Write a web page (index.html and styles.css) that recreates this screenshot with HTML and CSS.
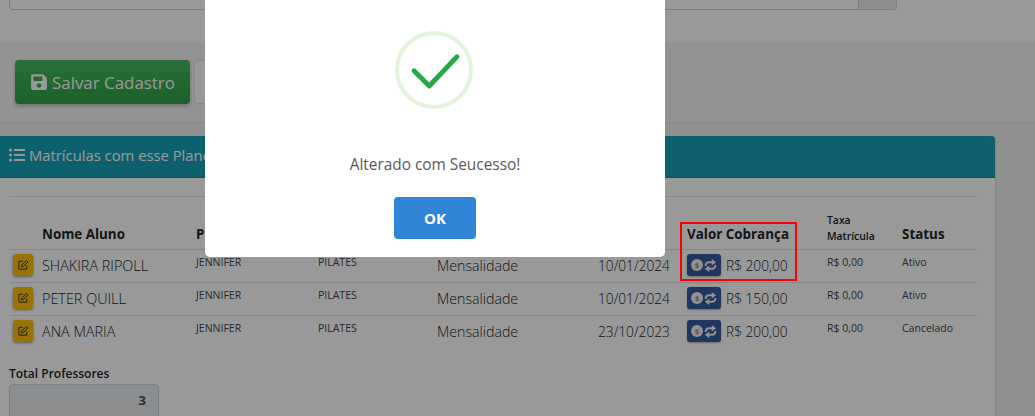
FILE: index.html
```html
<!DOCTYPE html>
<html lang="pt-BR">
<head>
<meta charset="utf-8">
<title>Matrículas</title>
<link rel="stylesheet" href="styles.css">
</head>
<body>
<div class="page">
  <div class="top-form">
    <div class="input-group"><div class="input-fill"></div><div class="input-addon"></div></div>
  </div>
  <div class="actions">
    <button class="btn-save">
      <svg class="ico-save" viewBox="0 0 448 512"><path fill="currentColor" d="M433.941 129.941l-83.882-83.882A48 48 0 0 0 316.118 32H48C21.49 32 0 53.49 0 80v352c0 26.51 21.49 48 48 48h352c26.51 0 48-21.49 48-48V163.882a48 48 0 0 0-14.059-33.941zM224 416c-35.346 0-64-28.654-64-64 0-35.346 28.654-64 64-64s64 28.654 64 64c0 35.346-28.654 64-64 64zm96-304.52V212c0 6.627-5.373 12-12 12H76c-6.627 0-12-5.373-12-12V108c0-6.627 5.373-12 12-12h228.52c3.183 0 6.235 1.264 8.485 3.515l3.48 3.48A11.996 11.996 0 0 1 320 111.48z"/></svg>
      Salvar Cadastro
    </button>
    <button class="btn-light"></button>
  </div>
  <div class="gutter">
    <section class="card">
      <header class="card-head">
        <svg class="ico-list" viewBox="0 0 512 512"><path fill="currentColor" d="M48 48a48 48 0 1 0 48 48 48 48 0 0 0-48-48zm0 160a48 48 0 1 0 48 48 48 48 0 0 0-48-48zm0 160a48 48 0 1 0 48 48 48 48 0 0 0-48-48zm448 16H176a16 16 0 0 0-16 16v32a16 16 0 0 0 16 16h320a16 16 0 0 0 16-16v-32a16 16 0 0 0-16-16zm0-320H176a16 16 0 0 0-16 16v32a16 16 0 0 0 16 16h320a16 16 0 0 0 16-16V80a16 16 0 0 0-16-16zm0 160H176a16 16 0 0 0-16 16v32a16 16 0 0 0 16 16h320a16 16 0 0 0 16-16v-32a16 16 0 0 0-16-16z"/></svg>
        <span>Matrículas com esse Plano</span>
      </header>
      <div class="card-body">
        <table class="grid">
          <colgroup>
            <col class="c-act"><col class="c-name"><col class="c-prof"><col class="c-mod"><col class="c-tipo"><col class="c-date"><col class="c-val"><col class="c-taxa"><col class="c-status">
          </colgroup>
          <thead>
            <tr>
              <th></th><th>Nome Aluno</th><th>Professor</th><th></th><th></th><th></th><th>Valor Cobrança</th><th class="th-small">Taxa Matrícula</th><th>Status</th>
            </tr>
          </thead>
          <tbody>
            <tr>
              <td class="cell-act"><button class="btn-edit"><svg viewBox="0 0 16 16"><path d="M13 9v4.500H2.500V3H8"/><path d="M6 10.500l.6-2.600 6-6 2 2-6 6z"/></svg></button></td>
              <td class="cell-name">SHAKIRA RIPOLL</td><td class="cell-small">JENNIFER</td><td class="cell-small">PILATES</td><td class="cell-tipo">Mensalidade</td><td class="cell-big">10/01/2024</td>
              <td class="cell-big"><div class="val"><button class="btn-pay"><svg class="ico-coin" viewBox="0 0 14 14"><circle cx="7" cy="7" r="7"/><text x="7" y="10" class="coin-text">$</text></svg><svg class="ico-swap" viewBox="0 0 16 16"><path d="M2 8.500C2 5.500 3.500 4 6 4h4"/><path d="M14 7.500C14 10.500 12.500 12 10 12H6"/><path class="head" d="M9.500 0L15 4 9.500 8z"/><path class="head" d="M6.500 8L1 12l5.500 4z"/></svg></button>R$ 200,00</div></td>
              <td class="cell-small">R$ 0,00</td><td class="cell-small">Ativo</td>
            </tr>
            <tr>
              <td class="cell-act"><button class="btn-edit"><svg viewBox="0 0 16 16"><path d="M13 9v4.500H2.500V3H8"/><path d="M6 10.500l.6-2.600 6-6 2 2-6 6z"/></svg></button></td>
              <td class="cell-name">PETER QUILL</td><td class="cell-small">JENNIFER</td><td class="cell-small">PILATES</td><td class="cell-tipo">Mensalidade</td><td class="cell-big">10/01/2024</td>
              <td class="cell-big"><div class="val"><button class="btn-pay"><svg class="ico-coin" viewBox="0 0 14 14"><circle cx="7" cy="7" r="7"/><text x="7" y="10" class="coin-text">$</text></svg><svg class="ico-swap" viewBox="0 0 16 16"><path d="M2 8.500C2 5.500 3.500 4 6 4h4"/><path d="M14 7.500C14 10.500 12.500 12 10 12H6"/><path class="head" d="M9.500 0L15 4 9.500 8z"/><path class="head" d="M6.500 8L1 12l5.500 4z"/></svg></button>R$ 150,00</div></td>
              <td class="cell-small">R$ 0,00</td><td class="cell-small">Ativo</td>
            </tr>
            <tr>
              <td class="cell-act"><button class="btn-edit"><svg viewBox="0 0 16 16"><path d="M13 9v4.500H2.500V3H8"/><path d="M6 10.500l.6-2.600 6-6 2 2-6 6z"/></svg></button></td>
              <td class="cell-name">ANA MARIA</td><td class="cell-small">JENNIFER</td><td class="cell-small">PILATES</td><td class="cell-tipo">Mensalidade</td><td class="cell-big">23/10/2023</td>
              <td class="cell-big"><div class="val"><button class="btn-pay"><svg class="ico-coin" viewBox="0 0 14 14"><circle cx="7" cy="7" r="7"/><text x="7" y="10" class="coin-text">$</text></svg><svg class="ico-swap" viewBox="0 0 16 16"><path d="M2 8.500C2 5.500 3.500 4 6 4h4"/><path d="M14 7.500C14 10.500 12.500 12 10 12H6"/><path class="head" d="M9.500 0L15 4 9.500 8z"/><path class="head" d="M6.500 8L1 12l5.500 4z"/></svg></button>R$ 200,00</div></td>
              <td class="cell-small">R$ 0,00</td><td class="cell-small">Cancelado</td>
            </tr>
          </tbody>
        </table>
        <div class="total">
          <div class="total-label">Total Professores</div>
          <div class="total-box">3</div>
        </div>
      </div>
    </section>
  </div>
</div>

<div class="backdrop"></div>
<div class="highlight"></div>
<div class="modal">
  <div class="success-ring">
    <svg viewBox="0 0 48 36"><path d="M4 18.700L19.300 34 47 4.700"/></svg>
  </div>
  <p class="modal-text">Alterado com Seucesso!</p>
  <button class="modal-ok">OK</button>
</div>
</body>
</html>
```
FILE: styles.css
```css
* { box-sizing: border-box; }
html, body { margin: 0; height: 416px; overflow: hidden; }
body { font-family: "Open Sans", "Noto Sans", sans-serif; color: #212529; background: #fff; }
button { font-family: inherit; }

.page { height: 416px; overflow: hidden; display: flex; flex-direction: column; }

.top-form { height: 42px; padding: 0 138px 0 9px; background: #fff; }
.input-group { height: 10px; display: flex; border: 1px solid #ced4da; border-top: 0; border-radius: 0 0 4px 4px; }
.input-fill { flex: 1; }
.input-addon { width: 38px; background: #e9ecef; border-left: 1px solid #ced4da; border-radius: 0 0 4px 0; }

.actions { height: 81px; padding: 18px 0 0 15px; display: flex; gap: 4px; align-items: flex-start; background: #f6f6f6; border-bottom: 1px solid #e4e5e6; }
.btn-save { width: 175px; height: 44px; border: 0; border-radius: 4px; background: linear-gradient(#48b761, #2ba445); color: #fff; font-size: 16.9px; display: flex; align-items: center; gap: 5px; padding: 0 0 0 16px; box-shadow: 0 2px 4px rgba(0,0,0,.25); }
.ico-save { width: 16px; height: 18px; }
.btn-light { width: 100px; height: 44px; border: 1px solid #dee2e6; border-radius: 4px; background: #fff; }

.gutter { flex: 1; background: #f0f1f2; padding-top: 13px; min-height: 0; }
.card { width: 995px; height: 100%; background: #fff; border-radius: 0 4px 0 0; box-shadow: 1px 0 2px rgba(0,0,0,.12); }
.card-head { height: 42px; background: #17a2b8; border-radius: 0 4px 0 0; color: #fff; font-size: 14.8px; display: flex; align-items: center; gap: 4px; padding: 0 0 3px 9px; border-bottom: 1px solid #148ea1; }
.ico-list { width: 16px; height: 16px; }
.card-body { padding: 18px 18px 0 9px; }

.grid { width: 968px; table-layout: fixed; border-collapse: collapse; border-top: 1px solid #dee2e6; }
.c-act { width: 29px; } .c-name { width: 154px; } .c-prof { width: 122px; } .c-mod { width: 119px; } .c-tipo { width: 161px; } .c-date { width: 89px; } .c-val { width: 140px; } .c-taxa { width: 75px; } .c-status { width: 79px; }
.grid th { height: 53px; padding: 0 4px 6px; vertical-align: bottom; text-align: left; font-size: 13.4px; font-weight: 700; border-bottom: 1px solid #dee2e6; white-space: nowrap; }
.grid th.th-small { font-size: 10.4px; font-weight: 600; line-height: 16px; white-space: normal; padding-bottom: 5px; }
.grid td { height: 33px; padding: 0 4px 2px; border-bottom: 1px solid #dee2e6; white-space: nowrap; }
.grid tbody tr:last-child td { border-bottom: 0; }
.cell-big { font-size: 13.7px; font-weight: 300; vertical-align: middle; }
.cell-tipo { font-size: 14.2px; font-weight: 300; vertical-align: middle; }
.cell-name { font-size: 14.4px; font-weight: 300; vertical-align: middle; }
.cell-small { font-size: 10.5px; font-weight: 400; color: #41464b; vertical-align: top; padding-top: 5px !important; }
.cell-act { vertical-align: middle; }
.btn-edit { width: 20px; height: 22px; padding: 0; border: 0; border-radius: 3px; background: #ffc107; box-shadow: 0 1px 3px rgba(0,0,0,.4); display: flex; align-items: center; justify-content: center; }
.btn-edit svg { width: 12px; height: 12px; fill: none; stroke: #212529; stroke-width: 1.2; }
.val { display: flex; align-items: center; gap: 5px; }
.btn-pay { width: 34px; height: 22px; padding: 0 4px; border: 0; border-radius: 3px; background: #345a9e; box-shadow: 0 1px 2px rgba(0,0,0,.3); display: flex; align-items: center; justify-content: space-between; }
.ico-coin { width: 12px; height: 12px; }
.ico-coin circle { fill: #f2f2f2; }
.coin-text { font-size: 9px; text-anchor: middle; fill: #8a8f98; font-weight: 700; }
.ico-swap { width: 13px; height: 13px; fill: none; stroke: #f2f2f2; stroke-width: 2.4; }
.ico-swap .head { fill: #f2f2f2; stroke: none; }

.total { margin-top: 17px; width: 150px; }
.total-label { font-size: 12px; font-weight: 600; line-height: 16px; }
.total-box { margin-top: 2px; height: 40px; background: #e9ecef; border: 1px solid #ced4da; border-radius: 4px; font-size: 13px; font-weight: 700; text-align: right; padding: 6px 12px; color: #495057; }

.backdrop { position: fixed; inset: 0; background: rgba(0,0,0,.4); }
.highlight { position: fixed; left: 680px; top: 222px; width: 117px; height: 59px; border: 2px solid #f00; }
.modal { position: fixed; left: 205px; top: 0; width: 460px; height: 257px; background: #fff; border-radius: 0 0 5px 5px; display: flex; flex-direction: column; align-items: center; padding-top: 31px; }
.success-ring { width: 78px; height: 78px; margin-right: 2px; border: 4px solid rgba(165,220,134,.3); border-radius: 50%; display: flex; align-items: center; justify-content: center; }
.success-ring svg { width: 48px; height: 36px; overflow: visible; fill: none; stroke: #28a745; stroke-width: 4.8; stroke-linecap: round; stroke-linejoin: round; }
.modal-text { margin: 45px 0 0; height: 22px; font-size: 15.4px; line-height: 22px; color: #595959; }
.modal-ok { margin-top: 21px; width: 82px; height: 42px; border: 0; border-radius: 4px; background: #3085d9; color: #fff; font-size: 15px; font-weight: 700; }
```
